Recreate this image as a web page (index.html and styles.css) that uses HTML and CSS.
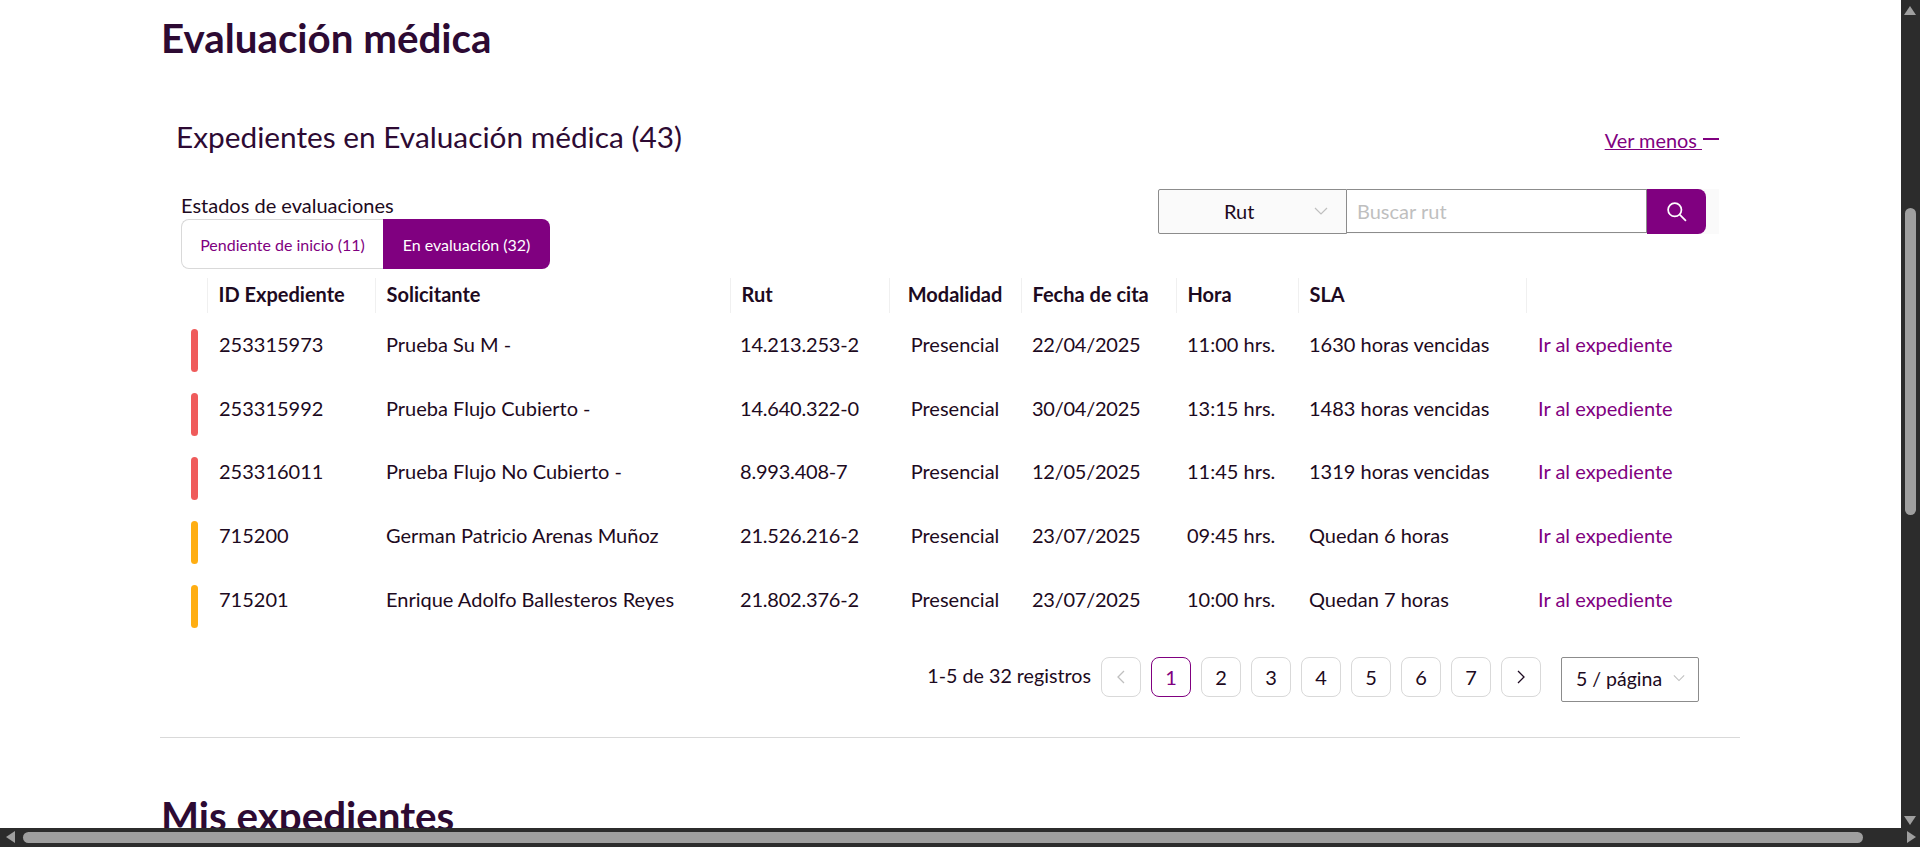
FILE: index.html
```html
<!DOCTYPE html>
<html lang="es">

<head>
    <meta charset="UTF-8">
    <meta name="viewport" content="width=device-width, initial-scale=1.0">
    <title>Evaluación médica</title>
    <link rel="stylesheet" href="styles.css">
</head>

<body>
    <div class="pagina">
        <h1 class="titulo">Evaluación médica</h1>

        <section class="seccion">
            <div class="cabecera">
                <h2 class="subtitulo">Expedientes en Evaluación médica (43)</h2>
                <a class="ver-menos" href="#"><span>Ver menos </span><i class="menos"></i></a>
            </div>

            <div class="filtros">
                <div class="estados">
                    <p class="estados-label">Estados de evaluaciones</p>
                    <div class="tabs">
                        <button class="tab">Pendiente de inicio (11)</button>
                        <button class="tab tab-activa">En evaluación (32)</button>
                    </div>
                </div>

                <div class="buscador">
                    <div class="buscador-select">
                        <span>Rut</span>
                        <svg class="chevron" viewBox="0 0 14 8"><path d="M1 1l6 6 6-6" /></svg>
                    </div>
                    <div class="buscador-input">Buscar rut</div>
                    <button class="buscador-btn">
                        <svg viewBox="0 0 20 20"><circle cx="8.5" cy="8.5" r="5.8" /><path d="M12.8 12.8l5.4 5.4" /></svg>
                    </button>
                </div>
            </div>

            <table class="tabla">
                <colgroup>
                    <col class="c-estado">
                    <col class="c-id">
                    <col class="c-nombre">
                    <col class="c-rut">
                    <col class="c-modalidad">
                    <col class="c-fecha">
                    <col class="c-hora">
                    <col class="c-sla">
                    <col class="c-accion">
                </colgroup>
                <thead>
                    <tr>
                        <th></th>
                        <th>ID Expediente</th>
                        <th>Solicitante</th>
                        <th>Rut</th>
                        <th class="centrado">Modalidad</th>
                        <th>Fecha de cita</th>
                        <th>Hora</th>
                        <th>SLA</th>
                        <th></th>
                    </tr>
                </thead>
                <tbody>
                    <tr>
                        <td><span class="marca roja"></span></td>
                        <td>253315973</td>
                        <td>Prueba Su M -</td>
                        <td>14.213.253-2</td>
                        <td class="centrado">Presencial</td>
                        <td>22/04/2025</td>
                        <td>11:00 hrs.</td>
                        <td>1630 horas vencidas</td>
                        <td><a href="#">Ir al expediente</a></td>
                    </tr>
                    <tr>
                        <td><span class="marca roja"></span></td>
                        <td>253315992</td>
                        <td>Prueba Flujo Cubierto -</td>
                        <td>14.640.322-0</td>
                        <td class="centrado">Presencial</td>
                        <td>30/04/2025</td>
                        <td>13:15 hrs.</td>
                        <td>1483 horas vencidas</td>
                        <td><a href="#">Ir al expediente</a></td>
                    </tr>
                    <tr>
                        <td><span class="marca roja"></span></td>
                        <td>253316011</td>
                        <td>Prueba Flujo No Cubierto -</td>
                        <td>8.993.408-7</td>
                        <td class="centrado">Presencial</td>
                        <td>12/05/2025</td>
                        <td>11:45 hrs.</td>
                        <td>1319 horas vencidas</td>
                        <td><a href="#">Ir al expediente</a></td>
                    </tr>
                    <tr>
                        <td><span class="marca amarilla"></span></td>
                        <td>715200</td>
                        <td>German Patricio Arenas Muñoz</td>
                        <td>21.526.216-2</td>
                        <td class="centrado">Presencial</td>
                        <td>23/07/2025</td>
                        <td>09:45 hrs.</td>
                        <td>Quedan 6 horas</td>
                        <td><a href="#">Ir al expediente</a></td>
                    </tr>
                    <tr>
                        <td><span class="marca amarilla"></span></td>
                        <td>715201</td>
                        <td>Enrique Adolfo Ballesteros Reyes</td>
                        <td>21.802.376-2</td>
                        <td class="centrado">Presencial</td>
                        <td>23/07/2025</td>
                        <td>10:00 hrs.</td>
                        <td>Quedan 7 horas</td>
                        <td><a href="#">Ir al expediente</a></td>
                    </tr>
                </tbody>
            </table>

            <div class="paginacion">
                <span class="total">1-5 de 32 registros</span>
                <button class="pag pag-off"><svg viewBox="0 0 10 14"><path d="M8 1L2 7l6 6" /></svg></button>
                <button class="pag pag-activa">1</button>
                <button class="pag">2</button>
                <button class="pag">3</button>
                <button class="pag">4</button>
                <button class="pag">5</button>
                <button class="pag">6</button>
                <button class="pag">7</button>
                <button class="pag"><svg viewBox="0 0 10 14"><path d="M2 1l6 6-6 6" /></svg></button>
                <div class="por-pagina">
                    <span>5 / página</span>
                    <svg class="chevron" viewBox="0 0 14 8"><path d="M1 1l6 6 6-6" /></svg>
                </div>
            </div>
        </section>

        <h1 class="titulo titulo-mis">Mis expedientes</h1>
    </div>

    <!-- barras de scroll oscuras del navegador -->
    <div class="scroll-v">
        <i class="flecha arriba"></i>
        <div class="thumb-v"></div>
        <i class="flecha abajo"></i>
    </div>
    <div class="scroll-h">
        <i class="flecha izquierda"></i>
        <div class="thumb-h"></div>
        <i class="flecha derecha"></i>
    </div>
</body>

</html>
```

FILE: styles.css
```css
* {
    box-sizing: border-box;
    margin: 0;
    padding: 0;
}

html,
body {
    height: 100%;
    overflow: hidden;
    background-color: white;
}

body {
    font-family: Lato, 'Liberation Sans', sans-serif;
    font-size: 20px;
    color: #1d0a21;
}

a {
    color: #800080;
    text-decoration: none;
}

button {
    font-family: inherit;
    background: none;
    border: none;
}

.pagina {
    width: 1901px;
    height: 828px;
    overflow: hidden;
    padding: 14px 160px 0 161px;
}

.titulo {
    font-size: 40.3px;
    line-height: 48px;
    font-weight: 700;
    color: #2d0a33;
}

.titulo-mis {
    margin-top: 54px;
}

.seccion {
    margin-top: 51px;
    width: 1580px;
    margin-left: -1px;
    height: 625px;
    border-bottom: 1px solid #d9d9d9;
}

.cabecera {
    display: flex;
    justify-content: space-between;
    padding: 1px 21px 0 16px;
    height: 46px;
}

.subtitulo {
    font-size: 29.8px;
    line-height: 46px;
    font-weight: 400;
    color: #2d0a33;
}

.ver-menos {
    display: flex;
    align-items: center;
    margin-top: 9px;
    height: 34px;
    font-size: 19.9px;
}

.ver-menos span {
    text-decoration: underline;
    white-space: pre;
}

.menos {
    width: 16px;
    height: 2px;
    margin-top: -3px;
    margin-left: 1px;
    background-color: #800080;
}

.filtros {
    display: flex;
    justify-content: space-between;
    align-items: flex-start;
    padding: 0 21px;
    margin-top: 30px;
}

.estados {
    padding-top: 3px;
}

.estados-label {
    line-height: 26px;
    margin-bottom: 1px;
}

.tabs {
    display: flex;
    width: 369px;
    height: 50px;
}

.tab {
    width: 202px;
    border: 1px solid #d9d9d9;
    border-right: none;
    border-radius: 8px 0 0 8px;
    font-size: 16px;
    color: #800080;
}

.tab-activa {
    width: 167px;
    border: none;
    border-radius: 0 8px 8px 0;
    background-color: #800080;
    color: white;
}

.buscador {
    display: flex;
    width: 561px;
    margin-top: 0;
    padding-right: 13px;
    background-color: #fafafa;
    height: 45px;
}

.buscador-select {
    display: flex;
    align-items: center;
    width: 189px;
    height: 45px;
    padding: 0 18px 2px 65px;
    justify-content: space-between;
    background-color: #fafafa;
    border: 1px solid #8c8c8c;
    border-radius: 2px 0 0 2px;
}

.chevron {
    width: 14px;
    height: 8px;
    fill: none;
    stroke: #bfbfbf;
    stroke-width: 1.2;
}

.buscador-input {
    width: 300px;
    flex: 1;
    height: 44px;
    line-height: 42px;
    padding-left: 10px;
    background-color: white;
    border: 1px solid #8c8c8c;
    border-left: none;
    color: #bfbfbf;
}

.buscador-btn {
    display: flex;
    align-items: center;
    justify-content: center;
    width: 59px;
    height: 45px;
    background-color: #800080;
    border-radius: 0 8px 8px 0;
}

.buscador-btn svg {
    width: 23px;
    height: 23px;
    fill: none;
    stroke: white;
    stroke-width: 1.5;
}

.tabla {
    margin-top: 9px;
    margin-left: 18px;
    width: 1542px;
    table-layout: fixed;
    border-collapse: collapse;
}

.c-estado { width: 29px; }
.c-id { width: 168px; }
.c-nombre { width: 355px; }
.c-rut { width: 159px; }
.c-modalidad { width: 132px; }
.c-fecha { width: 155px; }
.c-hora { width: 122px; }
.c-sla { width: 228px; }
.c-accion { width: 194px; }

th {
    height: 35px;
    padding-left: 11px;
    padding-bottom: 4px;
    text-align: left;
    font-weight: 700;
    color: #1d0a21;
    border-right: 1px solid #f0f0f0;
}

th:last-child {
    border-right: none;
}

td {
    height: 63.8px;
    padding-left: 11px;
    padding-bottom: 2px;
    white-space: nowrap;
}

td:first-child {
    padding: 12px 0 0 13px;
}

td:nth-child(2),
td:last-child {
    padding-left: 12px;
}

td:nth-child(4) {
    padding-left: 10px;
    letter-spacing: -0.2px;
}

td:nth-child(6) {
    letter-spacing: -0.25px;
}

.centrado {
    padding-left: 0;
    text-align: center;
}

.marca {
    display: block;
    width: 7px;
    height: 43px;
    border-radius: 4px;
}

.roja {
    background-color: #ef5b5b;
}

.amarilla {
    background-color: #ffae12;
}

.paginacion {
    display: flex;
    align-items: flex-start;
    justify-content: flex-end;
    gap: 10px;
    margin-top: 25px;
    padding-right: 41px;
}

.total {
    line-height: 40px;
    margin-top: -1px;
    font-size: 19.7px;
}

.pag {
    display: flex;
    align-items: center;
    justify-content: center;
    width: 40px;
    height: 40px;
    border: 1px solid #d9d9d9;
    border-radius: 8px;
    font-size: 20px;
    color: #1d0a21;
}

.pag svg {
    width: 10px;
    height: 14px;
    fill: none;
    stroke: #1d0a21;
    stroke-width: 1.3;
}

.pag-off svg {
    stroke: #bfbfbf;
}

.pag-activa {
    border-color: #800080;
    color: #800080;
}

.por-pagina {
    display: flex;
    align-items: center;
    justify-content: space-between;
    width: 138px;
    height: 45px;
    margin-left: 10px;
    padding: 0 13px 2px 14px;
    border: 1px solid #8c8c8c;
    border-radius: 2px;
    font-size: 19.5px;
}

.por-pagina .chevron {
    width: 12px;
}

.scroll-v {
    position: fixed;
    top: 0;
    right: 0;
    width: 19px;
    height: 847px;
    background-color: #2c2c2c;
}

.scroll-h {
    position: fixed;
    left: 0;
    bottom: 0;
    width: 1901px;
    height: 19px;
    background-color: #2c2c2c;
}

.thumb-v {
    position: absolute;
    top: 208px;
    left: 4px;
    width: 11px;
    height: 307px;
    border-radius: 6px;
    background-color: #9f9f9f;
}

.thumb-h {
    position: absolute;
    top: 4px;
    left: 23px;
    width: 1840px;
    height: 11px;
    border-radius: 6px;
    background-color: #9f9f9f;
}

.flecha {
    position: absolute;
    width: 0;
    height: 0;
    border-style: solid;
    border-color: transparent;
}

.arriba {
    top: 6px;
    left: 3px;
    border-width: 0 6px 9px;
    border-bottom-color: #9f9f9f;
}

.abajo {
    bottom: 22px;
    left: 3px;
    border-width: 9px 6px 0;
    border-top-color: #9f9f9f;
}

.izquierda {
    top: 3px;
    left: 6px;
    border-width: 6px 9px 6px 0;
    border-right-color: #9f9f9f;
}

.derecha {
    top: 3px;
    right: -15px;
    border-width: 6px 0 6px 9px;
    border-left-color: #9f9f9f;
}
```
